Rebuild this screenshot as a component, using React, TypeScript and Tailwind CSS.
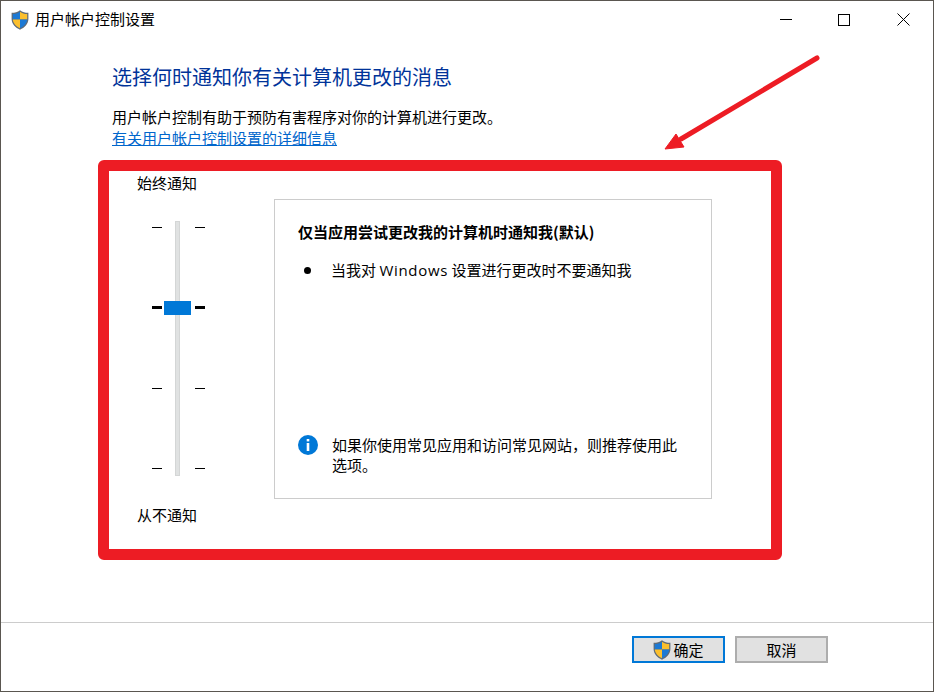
function Shield({ width = 18, height = 20 }: { width?: number; height?: number }) {
  return (
    <svg width={width} height={height} viewBox="0 0 18 20" className="shrink-0">
      <path d="M9 0.3 C6.5 2.3 4 2.8 0.6 2.8 L0.6 9 C0.6 14 4.5 17.7 9 19.7 C13.5 17.7 17.4 14 17.4 9 L17.4 2.8 C14 2.8 11.5 2.3 9 0.3 Z" fill="#5f6b78" />
      <path d="M9 1.8 C7 3.4 4.6 4 1.8 4.1 L1.8 9.5 L9 9.5 Z" fill="#1c79d4" />
      <path d="M9 1.8 C11 3.4 13.4 4 16.2 4.1 L16.2 9.5 L9 9.5 Z" fill="#fbbf2d" />
      <path d="M1.8 9.5 L9 9.5 L9 18.3 C5.2 16.5 2.2 13.6 1.8 9.5 Z" fill="#fbbf2d" />
      <path d="M16.2 9.5 L9 9.5 L9 18.3 C12.8 16.5 15.8 13.6 16.2 9.5 Z" fill="#1c79d4" />
    </svg>
  );
}

function TickRow({ active }: { active?: boolean }) {
  return (
    <div className="flex w-[53px] justify-between items-center h-[3px]">
      <div className={`w-[10px] bg-black ${active ? 'h-[3px]' : 'h-px'}`} />
      <div className={`w-[10px] bg-black ${active ? 'h-[3px]' : 'h-px'}`} />
    </div>
  );
}

export default function App() {
  return (
    <div
      className="relative w-[934px] h-[692px] bg-white flex flex-col border border-[#5a5650] text-black overflow-hidden"
      style={{ fontFamily: '"Noto Sans CJK SC", sans-serif' }}
    >
      {/* Title bar */}
      <div className="h-[37px] shrink-0 flex items-center pl-[10px]">
        <Shield />
        <span className="ml-[6px] mt-[-2px] text-[15px] leading-none">用户帐户控制设置</span>
        <div className="ml-auto flex items-center text-black">
          <div className="w-[12px] h-px bg-black mr-[46px]" />
          <div className="w-[12px] h-[12px] border border-black mr-[47px]" />
          <svg width="13" height="13" viewBox="0 0 13 13" className="mr-[23px]">
            <path d="M0.5 0.5 L12.5 12.5 M12.5 0.5 L0.5 12.5" stroke="black" strokeWidth="1" fill="none" />
          </svg>
        </div>
      </div>

      {/* Content */}
      <div className="flex-1 pl-[111px] flex flex-col">
        <h1 className="mt-[24px] text-[20px] leading-[30px] text-[#003399]">选择何时通知你有关计算机更改的消息</h1>
        <p className="mt-[15px] text-[15px] leading-[20px]">用户帐户控制有助于预防有害程序对你的计算机进行更改。</p>
        <a className="mt-px text-[15px] leading-[20px] text-[#0066cc] underline w-fit">有关用户帐户控制设置的详细信息</a>

        <div className="mt-[25px] flex">
          {/* Slider */}
          <div className="w-[162px] flex flex-col">
            <span className="ml-[25px] text-[15px] leading-[20px]">始终通知</span>
            <div className="relative ml-[40px] mt-[28px] w-[53px] h-[255px]">
              <div className="absolute left-[23px] top-0 w-[5px] h-full bg-[#e0e2e2] border border-[#d4d6d6]" />
              <div className="flex flex-col justify-between h-full pt-[5px] pb-[6px]">
                <TickRow />
                <TickRow active />
                <TickRow />
                <TickRow />
              </div>
              <div className="absolute left-[12px] top-[80px] w-[27px] h-[14px] bg-[#0078d7]" />
            </div>
            <span className="ml-[25px] mt-[29px] text-[15px] leading-[20px]">从不通知</span>
          </div>

          {/* Description box */}
          <div className="mt-[26px] w-[438px] h-[300px] border border-[#cccccc] flex flex-col pl-[23px] pr-[30px]">
            <p className="mt-[22px] text-[15px] leading-[20px] font-bold">仅当应用尝试更改我的计算机时通知我(默认)</p>
            <div className="mt-[18px] flex items-center text-[15px] leading-[20px]">
              <div className="w-[7px] h-[7px] rounded-full bg-black ml-[6px] mr-[20px]" />
              <span>
                当我对 <span className="tracking-[0.7px]" style={{ fontFamily: '"Open Sans", sans-serif' }}>Windows</span> 设置进行更改时不要通知我
              </span>
            </div>
            <div className="mt-auto mb-[23px] flex text-[15px] leading-[20px]">
              <div className="w-[20px] h-[20px] rounded-full bg-[#0078d7] flex items-center justify-center shrink-0">
                <svg width="4" height="12" viewBox="0 0 4 12">
                  <rect x="0.7" y="0" width="2.6" height="2.4" fill="white" />
                  <rect x="0.7" y="4" width="2.6" height="8" fill="white" />
                </svg>
              </div>
              <p className="ml-[14px]">如果你使用常见应用和访问常见网站，则推荐使用此选项。</p>
            </div>
          </div>
        </div>
      </div>

      {/* Footer */}
      <div className="h-[69px] shrink-0 border-t border-[#cccccc] flex justify-end items-start pt-[13px] pr-[105px] gap-[10px]">
        <button className="w-[93px] h-[27px] bg-[#e1e1e1] border-2 border-[#0078d7] flex items-center justify-center text-[15px] leading-none">
          <Shield />
          <span className="ml-[2px]">确定</span>
        </button>
        <button className="w-[93px] h-[27px] bg-[#e1e1e1] border-2 border-[#adadad] flex items-center justify-center text-[15px] leading-none">
          取消
        </button>
      </div>

      {/* Red annotation */}
      <div className="absolute left-[97px] top-[159px] w-[684px] h-[400px] border-[11px] border-[#ed1c24] rounded-[6px]" />
      <svg className="absolute left-[650px] top-[40px]" width="180" height="120" viewBox="0 0 180 120">
        <path d="M166 17 L30 98" stroke="#ed1c24" strokeWidth="5" strokeLinecap="round" fill="none" />
        <path d="M14 108 L25 93 L33 106 Z" fill="#ed1c24" stroke="#ed1c24" strokeWidth="1" />
      </svg>
    </div>
  );
}
